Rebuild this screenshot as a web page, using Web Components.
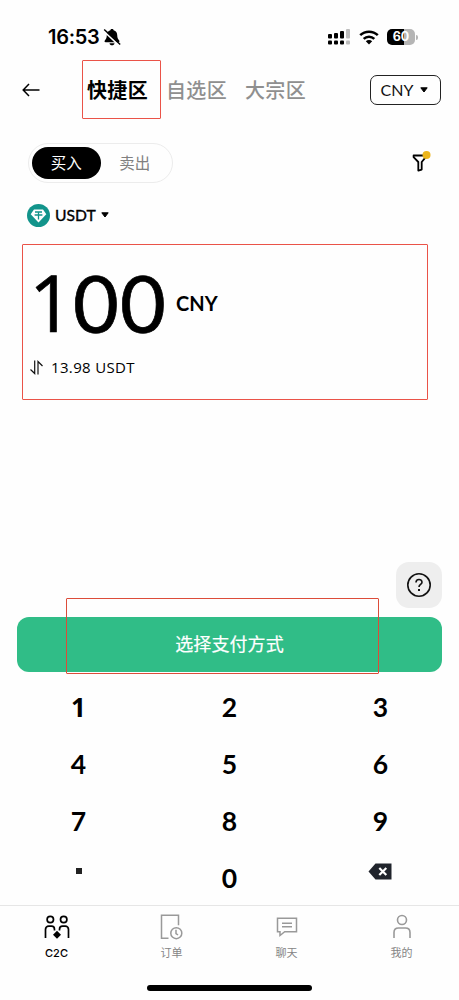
<!DOCTYPE html>
<html lang="zh-CN">
<head>
<meta charset="utf-8">
<meta name="viewport" content="width=device-width">
<title>C2C</title>
<style>
html,body{margin:0;background:#fefefe;}
</style>
</head>
<body>
<c2c-app></c2c-app>
<script>
const define = (name, html) => {
  const t = document.createElement('template');
  t.innerHTML = '<style>*{box-sizing:border-box}svg{display:block;flex:none}</style>' + html;
  customElements.define(name, class extends HTMLElement {
    constructor() {
      super();
      this.attachShadow({mode: 'open'}).appendChild(t.content.cloneNode(true));
    }
  });
};

define('highlight-box', `
<style>:host{position:absolute;border:1.3px solid #ea5348;border-radius:1px;pointer-events:none;box-sizing:border-box;z-index:2}</style>`);

define('caret-down', `
<style>:host{display:block}</style>
<svg width="8" height="6" viewBox="0 0 8 6"><path d="M.8.8h6.4L4 5z" fill="#000" stroke="#000" stroke-width="1" stroke-linejoin="round"/></svg>`);

define('status-bar', `
<style>
:host{display:flex;height:60px;padding:14px 41px 0 48px;align-items:center;color:#000}
.time{font:600 20px/24px Inter,sans-serif;letter-spacing:-.3px;width:55px;white-space:nowrap}
.bat{display:flex;align-items:center;margin-left:8px}
.cell{width:28px;height:16px;border-radius:5px;background:linear-gradient(90deg,#000 60%,#b5b5b5 60%);color:#fff;font:700 12.5px/16px Inter,sans-serif;text-align:center}
.nub{width:2px;height:5px;border-radius:0 2px 2px 0;background:#b5b5b5;margin-left:1px}
.sig{margin-left:auto}.wifi{margin-left:9px}
</style>
<span class="time">16:53</span>
<svg width="18" height="18" viewBox="0 0 18 18"><path d="M9 1c1 0 1.500.5 1.600 1.200 2.400.7 3.600 2.400 3.600 4.800 0 3.200 1 4.200 2 5.500.6.9.1 1.700-.8 1.700H2.600c-.9 0-1.400-.8-.8-1.700 1-1.300 2-2.300 2-5.500 0-2.400 1.200-4.100 3.600-4.800C7.500 1.500 8 1 9 1zM6.500 15.200h5c-.2 1.300-1.200 2.100-2.500 2.100s-2.300-.8-2.500-2.100z"/><path d="M0 2.300L16 17.300" stroke="#fefefe" stroke-width="1.800"/><path d="M1.200 1.500L17.200 16.500" stroke="#000" stroke-width="1.500"/></svg>
<svg class="sig" width="22" height="16" viewBox="0 0 22 16"><g><rect y="5" width="4" height="4.500" rx="1"/><rect x="6" y="4" width="4" height="5.500" rx="1"/><rect x="12" y="2" width="4" height="7.500" rx="1"/><rect y="11.500" width="4" height="4" rx="1"/><rect x="6" y="11.500" width="4" height="4" rx="1"/><rect x="12" y="11.500" width="4" height="4" rx="1"/></g><g fill="#bdbdbd"><rect x="18" y="0" width="4" height="9.500" rx="1"/><rect x="18" y="11.500" width="4" height="4" rx="1"/></g></svg>
<svg class="wifi" width="20" height="15" viewBox="0 0 20 15"><g fill="none" stroke="#000" stroke-width="2.500"><path d="M1.200 5.200a12.700 12.700 0 0 1 17.600 0"/><path d="M4.700 8.900a7.600 7.600 0 0 1 10.600 0"/></g><path d="M10 14.500l-3.200-3.200a4.600 4.600 0 0 1 6.400 0z"/></svg>
<div class="bat"><div class="cell">60</div><div class="nub"></div></div>`);

define('top-nav', `
<style>
:host{display:flex;position:relative;height:59px;align-items:center;padding:0 18px 0 22px;font:500 20px/28px Lato,"Noto Sans CJK SC",sans-serif;color:#8f8f8f}
nav{display:flex;margin-left:47px;gap:18px}
nav span{letter-spacing:.35px;white-space:nowrap;width:61px}
nav .on{color:#000;font-weight:700}
.cur{margin-left:auto;width:71px;height:30px;border:1.4px solid #222;border-radius:7px;display:flex;align-items:center;justify-content:center;gap:7px;font-size:16px;font-weight:400;color:#111;letter-spacing:0;padding-right:2px}
highlight-box{left:82px;top:0;width:79px;height:59px}
</style>
<svg width="18" height="14" viewBox="0 0 18 14" fill="none" stroke="#000" stroke-width="1.500"><path d="M17.500 7H1.200M7 1L1.200 7 7 13"/></svg>
<nav><span class="on">快捷区</span><span>自选区</span><span>大宗区</span></nav>
<div class="cur"><span>CNY</span><caret-down></caret-down></div>
<highlight-box></highlight-box>`);

define('trade-switch', `
<style>
:host{display:flex;height:40px;margin-top:24px;padding:0 28px;justify-content:space-between;font:400 15.500px/32px "Noto Sans CJK SC",sans-serif}
.seg{display:flex;width:145px;height:40px;border:1px solid #ececec;border-radius:20px;padding:3px}
.seg span{width:69px;height:32px;border-radius:16px;text-align:center;color:#808080;line-height:31px}
.seg .on{background:#000;color:#fff}
svg{margin-top:7px}
</style>
<div class="seg"><span class="on">买入</span><span>卖出</span></div>
<svg width="20" height="24" viewBox="0 0 20 24"><path d="M2.600 5.500h12.200v1.700L10.700 12v7.600l-3.400 1V12L2.600 7.200z" fill="none" stroke="#000" stroke-width="1.800" stroke-linejoin="round"/><circle cx="15.500" cy="5" r="4" fill="#ecb51b"/></svg>`);

define('token-picker', `
<style>
:host{display:flex;height:24px;margin:20px 0 0 27px;align-items:center;font:400 15.700px/24px Lato,sans-serif;color:#000}
span{margin:0 5px 0 5px;-webkit-text-stroke:.35px #000}
</style>
<svg width="23" height="23" viewBox="0 0 23 23"><circle cx="11.500" cy="11.500" r="11.500" fill="#12948b"/><path d="M7 5.500h9l3.300 4.800-7.800 8.200-7.800-8.200z" fill="#fff"/><path d="M8 8h7M11.500 8v7.500M7.600 11h7.800" fill="none" stroke="#12948b" stroke-width="1.300"/></svg>
<span>USDT</span><caret-down></caret-down>`);

define('amount-panel', `
<style>
:host{display:block;position:relative;margin:17px 31px 0 22px;height:156px;padding:14px 0 0 8px;color:#000}
.row{display:flex;align-items:center;height:90px}
.num{display:flex;font:400 79px/90px Lato,sans-serif;letter-spacing:1.200px;width:139px;margin-left:-1px;white-space:nowrap;-webkit-text-stroke:.7px #000}
.one{font-family:"Open Sans",sans-serif;font-size:78px;width:44px;position:relative;top:-1px}
.unit{font:700 20px/24px Lato,sans-serif;margin-left:8px}
.conv{display:flex;align-items:center;height:24px;margin-top:7px;gap:8px;font:400 15px/24px "Open Sans",sans-serif;letter-spacing:.35px;white-space:nowrap}
highlight-box{inset:0}
</style>
<div class="row"><span class="num"><span class="one">1</span><span>00</span></span><span class="unit">CNY</span></div>
<div class="conv"><svg width="13" height="15" viewBox="0 0 13 15" fill="none" stroke="#111" stroke-width="1.200"><path d="M4.700.5v13L.5 9.500M8 14.500v-13l4.500 4.500"/></svg><span>13.98 USDT</span></div>
<highlight-box></highlight-box>`);

define('help-button', `
<style>:host{display:flex;width:46px;height:46px;margin:162px 17px 0 auto;background:#eee;border-radius:13px;align-items:center;justify-content:center}</style>
<svg width="26" height="26" viewBox="0 0 26 26" fill="none" stroke="#111" stroke-width="1.600"><circle cx="13" cy="13" r="11.200"/><path d="M10 10.500c0-4 6-4 6-.3 0 2.300-3 2.300-3 4.800"/><path d="M13 17v2.100" stroke-width="2"/></svg>`);

define('primary-button', `
<style>
:host{display:block;position:relative;margin:9px 17px 0;height:55px;border-radius:12px;background:#30bd87;color:#fff;text-align:center;font:400 18px/53px "Noto Sans CJK SC",sans-serif;letter-spacing:.1px;-webkit-text-stroke:.2px #fff}
highlight-box{left:49px;top:-19px;width:313px;height:76px;border-color:#dc4c39}
</style>
<slot></slot><highlight-box></highlight-box>`);

define('key-pad', `
<style>
:host{display:grid;grid-template-columns:repeat(3,151px);grid-template-rows:repeat(4,57px);margin:7px 3px 0;height:226px;font:700 26.500px/57px Lato,sans-serif;text-align:center;color:#000}
.one{font-family:"Open Sans",sans-serif;font-size:26px}
.up{display:flex;align-items:center;justify-content:center;padding-bottom:15px}
.del{padding-right:1px}
</style>
<span class="one">1</span><span>2</span><span>3</span><span>4</span><span>5</span><span>6</span><span>7</span><span>8</span><span>9</span>
<div class="up"><svg width="6" height="6"><rect width="6" height="6" fill="#222"/></svg></div><span>0</span>
<div class="up del"><svg width="24" height="17" viewBox="0 0 24 17"><path d="M7.500.5H23.500v16H7.500L.5 8.500z" fill="#20242c"/><path d="M11.300 5l7 7M18.300 5l-7 7" stroke="#fff" stroke-width="2.200"/></svg></div>`);

define('tab-item', `
<style>
:host{display:flex;flex-direction:column;align-items:center;color:#858585;font:400 11px/16px Inter,"Noto Sans CJK SC",sans-serif}
:host([active]){color:#000;font-weight:500}
.icon{height:28px;display:flex;align-items:center;margin-bottom:4px}
</style>
<div class="icon"><slot name="icon"></slot></div><slot></slot>`);

define('tab-bar', `
<style>
:host{box-sizing:border-box;display:grid;grid-template-columns:repeat(4,115px);height:80px;padding-top:7px;border-top:1px solid #e6e6e6;width:459px}
tab-item{margin-left:-1px;margin-right:1px}
</style>
<tab-item active><svg slot="icon" width="26" height="26" viewBox="0 0 26 26" fill="none" stroke="#000" stroke-width="1.700"><circle cx="6.300" cy="5.500" r="3.200"/><circle cx="19.700" cy="5.500" r="3.200"/><path d="M1.500 24v-8.500c0-2 1.300-3.300 3.300-3.300h2.700c2 0 3 1.300 3 3.300v1M24.500 24v-8.500c0-2-1.300-3.300-3.300-3.300h-2.700c-2 0-3 1.300-3 3.300v1"/><path d="M13 16.800l4 4-4 4-4-4z" fill="#000" stroke="none"/></svg>C2C</tab-item>
<tab-item><svg slot="icon" width="23" height="26" viewBox="0 0 23 26" fill="none" stroke="#999" stroke-width="1.500"><path d="M8.500 24.200H1.500V1.200h17v10"/><circle cx="16.300" cy="19.200" r="5.500"/><path d="M16 15.800v3.700l2 1.500"/></svg>订单</tab-item>
<tab-item><svg slot="icon" width="22" height="22" viewBox="0 0 22 22" fill="none" stroke="#999" stroke-width="1.500"><path d="M1.500 2.200h19v13.500H8.700L4 19.500v-3.800H1.500zM6 7.200h10M6 10.700h10"/></svg>聊天</tab-item>
<tab-item><svg slot="icon" width="20" height="26" viewBox="0 0 20 26" fill="none" stroke="#999" stroke-width="1.600"><circle cx="10" cy="6" r="4.500"/><path d="M2 24v-5.500C2 15.500 4 14 6.500 14h7c2.500 0 4.500 1.500 4.500 4.500V24"/></svg>我的</tab-item>`);

define('home-indicator', `
<style>:host{display:block;width:165px;height:6px;border-radius:3px;background:#000;margin:0 0 0 147px}</style>`);

define('c2c-app', `
<style>:host{display:block;width:459px;height:1000px;overflow:hidden;background:#fefefe}</style>
<status-bar></status-bar>
<top-nav></top-nav>
<trade-switch></trade-switch>
<token-picker></token-picker>
<amount-panel></amount-panel>
<help-button></help-button>
<primary-button>选择支付方式</primary-button>
<key-pad></key-pad>
<tab-bar></tab-bar>
<home-indicator></home-indicator>`);
</script>
</body>
</html>
